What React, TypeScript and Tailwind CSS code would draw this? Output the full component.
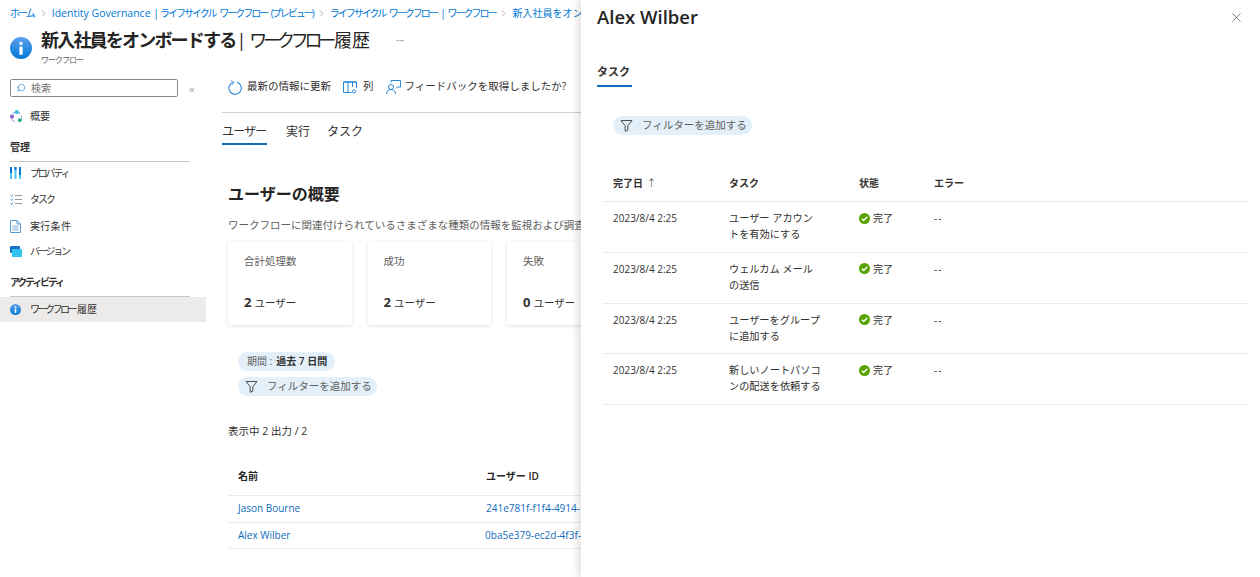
import { ChevronRight, X, Search } from "lucide-react";

const font = { fontFamily: '"Open Sans", "Noto Sans CJK JP", sans-serif' };

const InfoIcon = ({ size }: { size: number }) => (
  <svg width={size} height={size} viewBox="0 0 22 22" className="shrink-0">
    <defs>
      <linearGradient id="info" x1="0" y1="0" x2="0" y2="1">
        <stop offset="0" stopColor="#5ea0ef" />
        <stop offset="1" stopColor="#0078d4" />
      </linearGradient>
    </defs>
    <circle cx="11" cy="11" r="11" fill="url(#info)" />
    <circle cx="11" cy="6.4" r="1.7" fill="#fff" />
    <rect x="9.4" y="9.4" width="3.2" height="8.4" rx="0.6" fill="#fff" />
  </svg>
);

const FunnelIcon = () => (
  <svg width="13" height="13" viewBox="0 0 13 13" fill="none" stroke="#505050" strokeWidth="1" className="shrink-0">
    <path d="M1 1.5h11L7.8 6.8v4.4l-2.6 1V6.8z" />
  </svg>
);

const CheckIcon = () => (
  <svg width="11" height="11" viewBox="0 0 11 11" className="shrink-0">
    <circle cx="5.5" cy="5.5" r="5.5" fill="#57a300" />
    <path d="M2.8 5.7l1.9 1.9 3.6-3.8" fill="none" stroke="#fff" strokeWidth="1.4" />
  </svg>
);

const OverviewIcon = () => (
  <svg width="13" height="13" viewBox="0 0 13 13" fill="none" className="shrink-0">
    <path d="M3 3.5a4.8 4.8 0 0 1 7 0" stroke="#5ea0ef" strokeWidth="1.2" />
    <path d="M11.2 5.2a4.8 4.8 0 0 1-2.6 6.2" stroke="#9cb8d8" strokeWidth="1.2" />
    <path d="M1.5 8a4.8 4.8 0 0 0 3.5 3.6" stroke="#c4b0e8" strokeWidth="1.2" />
    <circle cx="6.8" cy="2" r="1.9" fill="#32bedd" />
    <circle cx="2" cy="6.6" r="2" fill="#8661c5" />
    <circle cx="9.8" cy="10.2" r="1.9" fill="#2aa88c" />
  </svg>
);

const PropsIcon = () => (
  <svg width="11" height="12" viewBox="0 0 11 12" className="shrink-0">
    <rect x="0" y="0" width="2" height="12" fill="#50c7f0" />
    <rect x="4.5" y="0" width="2" height="12" fill="#50c7f0" />
    <rect x="9" y="0" width="2" height="12" fill="#50c7f0" />
    <rect x="0" y="0" width="2" height="6" fill="#0078d4" />
    <rect x="4.5" y="0" width="2" height="3" fill="#0078d4" />
    <rect x="9" y="0" width="2" height="8" fill="#0078d4" />
  </svg>
);

const TaskIcon = () => (
  <svg width="12" height="11" viewBox="0 0 12 11" fill="none" className="shrink-0">
    <path d="M0.5 1.5l1 1 1.5-2M0.5 5.5l1 1 1.5-2M0.5 9.5l1 1 1.5-2" stroke="#2b88d8" strokeWidth="0.9" />
    <path d="M5 1.5h7M5 5.5h7M5 9.5h7" stroke="#999" strokeWidth="1" />
  </svg>
);

const DocIcon = () => (
  <svg width="11" height="13" viewBox="0 0 11 13" fill="none" className="shrink-0">
    <path d="M0.5 0.5h6.5l3.5 3.5v8.5h-10z" fill="#fff" stroke="#5b9bd5" />
    <path d="M7 0.5v3.5h3.5" stroke="#5b9bd5" />
    <path d="M2.5 6h6M2.5 8h6M2.5 10h6" stroke="#5b9bd5" strokeWidth="0.8" />
  </svg>
);

const VersionIcon = () => (
  <svg width="12" height="11" viewBox="0 0 12 11" className="shrink-0">
    <rect x="0" y="0" width="10" height="7" rx="1" fill="#1b6ec2" />
    <rect x="2" y="3" width="10" height="8" rx="0.6" fill="#32c5f0" />
  </svg>
);

const RefreshIcon = () => (
  <svg width="14" height="15" viewBox="0 0 14 15" fill="none" stroke="#2b88d8" strokeWidth="1.1" className="shrink-0">
    <path d="M5.6 2.2a6.2 6.2 0 1 0 3.4 0.1" />
    <path d="M2.8 0.8l2.9 1.4-1.5 2.6" stroke="#6aa8dc" />
  </svg>
);

const ColumnsIcon = () => (
  <svg width="14" height="13" viewBox="0 0 14 13" fill="none" stroke="#2b88d8" className="shrink-0">
    <path d="M0.5 1h13" strokeWidth="1.6" />
    <path d="M0.5 1v10.5h8M13.5 1v6M5 1v10.5M9.5 1v5" />
    <circle cx="11" cy="10.5" r="1.6" />
  </svg>
);

const FeedbackIcon = () => (
  <svg width="15" height="14" viewBox="0 0 15 14" fill="none" stroke="#2b88d8" className="shrink-0">
    <circle cx="5" cy="7" r="2.5" />
    <path d="M0.5 14c0-3 2-4.5 4.5-4.5s4.5 1.5 4.5 4.5" />
    <path d="M5 2.5V0.5h9.5v6.5h-3l-1.5 1.5" />
  </svg>
);

const NavItem = ({ icon, label, className, tracking }: { icon: React.ReactNode; label: React.ReactNode; className: string; tracking?: string }) => (
  <div className={`flex items-center pl-[10px] ${className}`}>
    <span className="flex w-[20px] shrink-0">{icon}</span>
    <span className={`whitespace-nowrap text-[10px] text-[#323130] ${tracking ?? ""}`}>{label}</span>
  </div>
);

const Pill = ({ children, className }: { children: React.ReactNode; className?: string }) => (
  <div className={`flex h-[19px] w-fit items-center rounded-full bg-[#e3eff9] text-[10.5px] text-[#605e5c] ${className ?? ""}`}>
    {children}
  </div>
);

const AddFilter = () => (
  <Pill className="pl-[7px] pr-[5px]">
    <FunnelIcon />
    <span className="ml-[9px] whitespace-nowrap">フィルターを追加する</span>
  </Pill>
);

const tasks = [
  ["ユーザー アカウン", "トを有効にする"],
  ["ウェルカム メール", "の送信"],
  ["ユーザーをグループ", "に追加する"],
  ["新しいノートパソコ", "ンの配送を依頼する"],
];

const cards = [
  { title: "合計処理数", value: "2" },
  { title: "成功", value: "2" },
  { title: "失敗", value: "0" },
];

const Crumb = () => <ChevronRight size={11} strokeWidth={1} className="mx-[3px] shrink-0 text-[#605e5c]" />;

export default function App() {
  return (
    <div style={font} className="relative h-[577px] w-[1260px] overflow-hidden bg-white text-[#323130]">
      <div className="h-full w-[581px] overflow-hidden">
        {/* breadcrumb */}
        <div className="flex h-[28px] items-center whitespace-nowrap pl-[10px] pb-[1px] text-[10.5px] text-[#0078d4]">
          <span className="text-[10px] tracking-[-2px]">ホーム</span>
          <span className="ml-[1px]"><Crumb /></span>
          <span>Identity Governance |</span>
          <span className="ml-[1px] text-[10px] tracking-[-2px] [word-spacing:3px]">ライフサイクル ワークフロー (プレビュー)</span>
          <Crumb />
          <span className="text-[10px] tracking-[-2px] [word-spacing:3px]">ライフサイクル ワークフロー | ワークフロー</span>
          <Crumb />
          <span className="text-[10px]">新入社員をオンボードする</span>
        </div>

        {/* title */}
        <div className="flex h-[46px] pl-[10px]">
          <div className="mt-[9px]">
            <InfoIcon size={22} />
          </div>
          <div className="ml-[9px]">
            <div className="flex h-[24px] items-center whitespace-nowrap text-[18px] leading-[24px] text-[#252423]">
              <span className="font-semibold tracking-[-1.8px]">新入社員をオンボードする</span>
              <span className="ml-[1px]">|</span>
              <span className="ml-[3px] tracking-[-4.2px]">ワークフロー</span>
              <span className="ml-[2px]">履歴</span>
              <span className="ml-[26px] text-[10px] text-[#605e5c]">···</span>
            </div>
            <div className="mt-[3px] text-[8px] leading-[10px] tracking-[-1px] text-[#605e5c]">ワークフロー</div>
          </div>
        </div>

        <div className="flex">
          {/* sidebar */}
          <aside className="w-[206px] shrink-0">
            <div className="mt-[5px] flex items-center pl-[10px]">
              <div className="flex h-[18px] w-[168px] items-center rounded-[2px] border border-[#8a8886] pl-[5px] text-[10px] text-[#707070]">
                <Search size={10} strokeWidth={1.4} className="-scale-x-100 text-[#0078d4]" />
                <span className="ml-[5px]">検索</span>
              </div>
              <span className="ml-[11px] text-[11px] leading-none text-[#a19f9d]">«</span>
            </div>
            <NavItem icon={<OverviewIcon />} label="概要" className="mt-[9px] h-[20px]" />
            <div className="mt-[14px] ml-[10px] w-[180px] border-b border-[#c8c6c4] pb-[7px] text-[10px] font-semibold leading-[14px]">管理</div>
            <NavItem icon={<PropsIcon />} label="プロパティ" tracking="tracking-[-2.2px]" className="mt-[1px] h-[20px]" />
            <NavItem icon={<TaskIcon />} label="タスク" tracking="tracking-[-2px]" className="mt-[6px] h-[20px]" />
            <NavItem icon={<DocIcon />} label="実行条件" tracking="tracking-[0.3px]" className="mt-[7px] h-[20px]" />
            <NavItem icon={<VersionIcon />} label="バージョン" tracking="tracking-[-2.2px]" className="mt-[5px] h-[20px]" />
            <div className="mt-[14px] ml-[10px] w-[180px] whitespace-nowrap border-b border-[#c8c6c4] pb-[7px] text-[10px] font-semibold leading-[14px] tracking-[-2.2px]">アクティビティ</div>
            <NavItem
              icon={<InfoIcon size={11} />}
              label={
                <>
                  <span className="tracking-[-2.5px]">ワークフロー</span>
                  <span className="ml-[2px]">履歴</span>
                </>
              }
              className="h-[25px] bg-[#edebe9]"
            />
          </aside>

          {/* main */}
          <main className="min-w-0 flex-1 pl-[16px]">
            <div className="flex h-[39px] items-center whitespace-nowrap border-b border-[#d2d0ce] pl-[6px] pb-[12px] text-[10.5px] text-[#323130]">
              <RefreshIcon />
              <span className="ml-[5px]">最新の情報に更新</span>
              <span className="ml-[12px]"><ColumnsIcon /></span>
              <span className="ml-[6px]">列</span>
              <span className="ml-[12px]"><FeedbackIcon /></span>
              <span className="ml-[4px]">フィードバックを取得しましたか?</span>
            </div>
            <div className="mt-[8px] flex h-[24px] items-start whitespace-nowrap text-[12px] leading-[22px] text-[#323130]">
              <div className="h-[24px] w-[45px] border-b-2 border-[#0f6cbd] tracking-[-0.8px]">ユーザー</div>
              <div className="ml-[19px]">実行</div>
              <div className="ml-[17px]">タスク</div>
            </div>
            <div className="pl-[6px]">
              <h2 className="mt-[38px] whitespace-nowrap text-[16px] font-semibold leading-[22px] text-[#252423]">ユーザーの概要</h2>
              <p className="mt-[13px] whitespace-nowrap text-[10.5px] leading-[14px] text-[#605e5c]">
                ワークフローに関連付けられているさまざまな種類の情報を監視および調査します。
              </p>
              <div className="mt-[9px] flex gap-[16px]">
                {cards.map((c) => (
                  <div key={c.title} className="h-[84px] w-[123.5px] shrink-0 rounded-[2px] bg-white pl-[16px] pt-[13px] shadow-[0_1px_4px_rgba(0,0,0,0.12)]">
                    <div className="text-[10.5px] leading-[14px] text-[#605e5c]">{c.title}</div>
                    <div className="mt-[25px] flex items-baseline text-[10.5px] text-[#323130]">
                      <span className="text-[13px] font-bold">{c.value}</span>
                      <span className="ml-[3px]">ユーザー</span>
                    </div>
                  </div>
                ))}
              </div>
              <Pill className="mt-[27px] ml-[10px] whitespace-nowrap pl-[9px] pr-[8px] !text-[10px]">
                <span>期間 : </span>
                <span className="ml-[4px] font-semibold text-[#323130]">過去 7 日間</span>
              </Pill>
              <div className="ml-[10px] mt-[6px]">
                <AddFilter />
              </div>
              <div className="mt-[28px] text-[10.5px] leading-[14px] text-[#323130]">表示中 2 出力 / 2</div>
              <div className="mt-[30px] w-[353px] text-[10px]">
                <div className="flex h-[28px] items-start border-b border-[#edebe9] pl-[10px] pt-[1px] font-semibold text-[#252423]">
                  <span className="w-[248px]">名前</span>
                  <span>ユーザー ID</span>
                </div>
                {[
                  ["Jason Bourne", "241e781f-f1f4-4914-"],
                  ["Alex Wilber", "0ba5e379-ec2d-4f3f-"],
                ].map(([name, id]) => (
                  <div key={name} className="flex h-[26.5px] items-center whitespace-nowrap border-b border-[#edebe9] pl-[10px] text-[#0f6cbd]">
                    <span className="w-[248px]">{name}</span>
                    <span>{id}</span>
                  </div>
                ))}
              </div>
            </div>
          </main>
        </div>
      </div>

      {/* drawer */}
      <section className="absolute inset-y-0 left-[581px] right-0 bg-white pl-[16px] shadow-[-3px_0_8px_rgba(0,0,0,0.13)]">
        <div className="flex h-[30px] items-end justify-between pr-[16px]">
          <h1 className="text-[18.5px] font-semibold leading-[26px] text-[#252423]">Alex Wilber</h1>
          <X size={15} strokeWidth={1} className="mb-[5px] text-[#323130]" />
        </div>
        <div className="mt-[33px] h-[24px] w-[35px] whitespace-nowrap border-b-2 border-[#0f6cbd] text-[11px] font-semibold leading-[18px] text-[#323130]">
          タスク
        </div>
        <div className="ml-[16px] mt-[29px]">
          <AddFilter />
        </div>
        <div className="ml-[6px] mt-[37px] w-[645px] text-[10px]">
          <div className="flex h-[30px] items-center border-b border-[#edebe9] pl-[10px] pb-[7px] font-semibold text-[#323130]">
            <span className="w-[116px]">完了日 <span className="ml-[1px] font-normal text-[#605e5c]">↑</span></span>
            <span className="w-[130px]">タスク</span>
            <span className="w-[75px]">状態</span>
            <span>エラー</span>
          </div>
          {tasks.map((t) => (
            <div key={t[0]} className="flex h-[50.75px] border-b border-[#edebe9] pl-[10px] pt-[8px] leading-[16px]">
              <span className="w-[116px] text-[#323130]">2023/8/4 2:25</span>
              <span className="w-[130px] whitespace-nowrap text-[10.2px] text-[#323130]">
                {t[0]}
                <br />
                {t[1]}
              </span>
              <span className="flex h-[16px] w-[75px] items-center gap-[3px] text-[#323130]">
                <CheckIcon />
                完了
              </span>
              <span className="tracking-[1px]">--</span>
            </div>
          ))}
        </div>
      </section>
    </div>
  );
}
